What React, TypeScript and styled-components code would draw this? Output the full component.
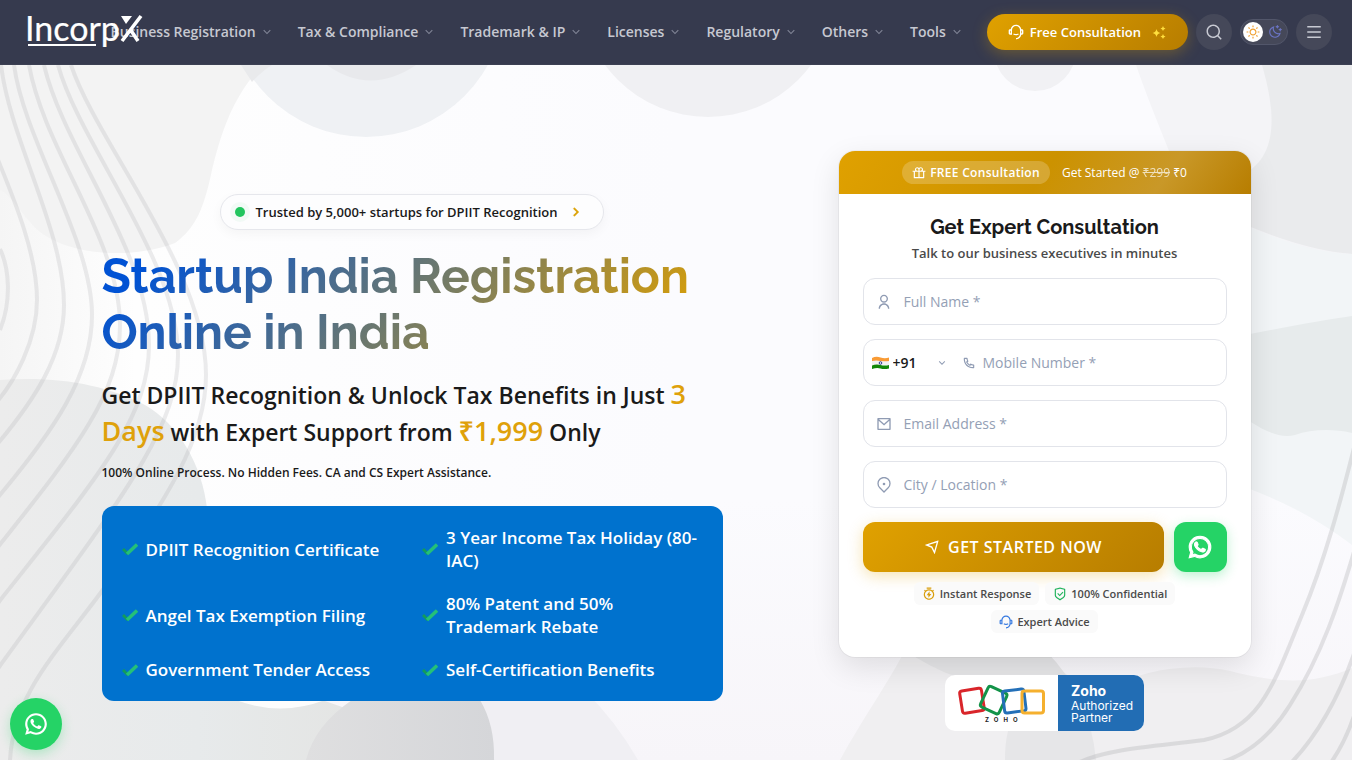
import React from "react";
import styled, { createGlobalStyle } from "styled-components";
import {
  RiArrowDownSLine,
  RiArrowRightSLine,
  RiCustomerService2Line,
  RiGiftLine,
  RiMailLine,
  RiMenuLine,
  RiMoonClearLine,
  RiPhoneLine,
  RiSearchLine,
  RiSendPlaneLine,
  RiShieldCheckLine,
  RiSunLine,
  RiTimerFlashLine,
  RiUserLine,
  RiWhatsappLine,
} from "react-icons/ri";

const GlobalStyle = createGlobalStyle`
  *, *::before, *::after { box-sizing: border-box; }
  body {
    margin: 0;
    background: #fbfbfe;
    color: #1a1a1a;
    font-family: "Open Sans", "Noto Sans", sans-serif;
  }
  button, input, select { font: inherit; }
`;

const Header = styled.header`
  position: relative;
  z-index: 2;
  display: flex;
  align-items: center;
  height: 65px;
  padding: 0 20px;
  border-bottom: 1px solid #3c4053;
  background: #363a4e;
`;

const LogoLink = styled.a`
  position: relative;
  z-index: 1;
  flex: 1 1 0;
  min-width: 0;
  height: 40px;
`;

const LogoArt = styled.svg`
  display: block;
  width: 128px;
  height: 40px;
  margin-left: 4px;
  overflow: visible;
`;

const Nav = styled.nav`
  display: flex;
  align-items: center;
  margin-right: 11px;
`;

const NavLink = styled.a`
  display: flex;
  align-items: center;
  gap: 4px;
  padding: 8px 12px;
  color: #c6c8d1;
  font-size: 14px;
  font-weight: 600;
  line-height: 20px;
  text-decoration: none;
  white-space: nowrap;

  svg { color: #7f8394; }
`;

const Actions = styled.div`
  display: flex;
  align-items: center;
  gap: 8px;
`;

const ConsultButton = styled.button`
  display: flex;
  align-items: center;
  gap: 6px;
  height: 36px;
  padding: 0 21px;
  border: 0;
  border-radius: 18px;
  background: linear-gradient(135deg, #e0a100, #b77d00);
  box-shadow: 0 4px 15px rgba(224, 161, 0, 0.3);
  color: #fff;
  font-size: 13px;
  font-weight: 600;
  white-space: nowrap;
`;

const Sparkles = styled.svg`
  margin-left: 4px;
`;

const RoundButton = styled.button`
  display: grid;
  place-items: center;
  width: 36px;
  height: 36px;
  padding: 0;
  border: 0;
  border-radius: 50%;
  background: #454859;
  color: #c8cad3;
`;

const ThemeToggle = styled.button`
  display: flex;
  align-items: center;
  justify-content: space-between;
  width: 48px;
  height: 26px;
  padding: 0 5px 0 2px;
  border: 1px solid #52566a;
  border-radius: 13px;
  background: #454859;
  color: #6a74c4;
`;

const ToggleKnob = styled.span`
  display: grid;
  place-items: center;
  width: 20px;
  height: 20px;
  border-radius: 50%;
  background: #fff;
  color: #f0a030;
`;

const Hero = styled.main`
  position: relative;
  min-height: calc(100vh - 65px);
  overflow: hidden;
  padding: 86px 24px 28px;
`;

const Backdrop = styled.svg`
  position: absolute;
  inset: 0;
  width: 100%;
  height: 100%;
`;

const HeroGrid = styled.div`
  position: relative;
  display: grid;
  grid-template-columns: minmax(0, 621px) minmax(0, 412px);
  justify-content: space-between;
  max-width: 1149px;
  margin: 0 auto;
`;

const Intro = styled.div`
  padding-top: 43px;
`;

const TrustBadge = styled.a`
  display: flex;
  align-items: center;
  width: fit-content;
  height: 36px;
  margin: 0 auto 18px;
  padding: 0 19px 0 14px;
  border: 1px solid #e6e7ec;
  border-radius: 18px;
  background: #fdfdfe;
  box-shadow: 0 4px 12px rgba(0, 0, 0, 0.04);
  color: #1a1a1a;
  font-size: 13px;
  font-weight: 600;
  text-decoration: none;

  svg { margin-left: 10px; color: #dba000; stroke: currentColor; stroke-width: 1; }
`;

const Dot = styled.span`
  width: 10px;
  height: 10px;
  margin-right: 10px;
  border-radius: 50%;
  background: #22c55e;
  box-shadow: 0 0 0 5px rgba(34, 197, 94, 0.05);
`;

const Title = styled.h1`
  margin: 0;
  background: linear-gradient(135deg, #0052d4 8%, #e0a100 92%);
  background-clip: text;
  -webkit-background-clip: text;
  color: transparent;
  font-family: Raleway, Lato, sans-serif;
  font-size: 48px;
  font-weight: 700;
  line-height: 56px;
`;

const Lead = styled.p`
  margin: 17px 0 12px;
  font-size: 23px;
  font-weight: 600;
  line-height: 37px;
`;

const Highlight = styled.span`
  color: #dfa10a;
  font-size: 27px;
  line-height: 1;
`;

const Note = styled.p`
  margin: 0 0 23px;
  font-size: 12px;
  font-weight: 600;
  line-height: 20px;
`;

const Benefits = styled.ul`
  display: grid;
  grid-template-columns: 1fr 1fr;
  gap: 20px;
  margin: 0;
  padding: 20px;
  border-radius: 12px;
  background: #0072ce;
  list-style: none;
`;

const Benefit = styled.li`
  display: flex;
  align-items: center;
  gap: 8px;
  color: #fff;
  font-size: 17px;
  font-weight: 600;
  line-height: 23px;

  svg { flex: none; }
`;

const Aside = styled.div`
  display: flex;
  flex-direction: column;
  align-items: center;
  gap: 18px;
`;

const Card = styled.section`
  width: 100%;
  overflow: hidden;
  border-radius: 16px;
  background: #fff;
  box-shadow: 0 0 0 1px rgba(0, 0, 0, 0.04), 0 10px 30px rgba(0, 0, 0, 0.11);
`;

const Offer = styled.div`
  display: flex;
  align-items: center;
  justify-content: center;
  gap: 12px;
  height: 43px;
  background: linear-gradient(125deg, #e0a100 0%, #cc9200 50%, #c99828 78%, #b77d00 100%);
  color: #fff;
  font-size: 12px;
`;

const OfferPill = styled.span`
  display: flex;
  align-items: center;
  gap: 4px;
  height: 23px;
  padding: 0 10px;
  border-radius: 12px;
  background: rgba(255, 255, 255, 0.2);
  font-weight: 600;
  letter-spacing: 0.3px;
`;

const OldPrice = styled.s`
  opacity: 0.7;
`;

const Form = styled.form`
  display: flex;
  flex-direction: column;
  gap: 14px;
  padding: 19px 24px 24px;
`;

const FormHead = styled.div`
  padding-bottom: 1px;
  text-align: center;
`;

const FormTitle = styled.h2`
  margin: 0;
  font-family: Raleway, Lato, sans-serif;
  font-size: 20px;
  font-weight: 700;
  line-height: 28px;
`;

const FormHint = styled.p`
  margin: 2px 0 0;
  color: #4a4a4a;
  font-size: 13px;
  font-weight: 600;
  line-height: 20px;
`;

const Field = styled.div<{ $phone?: boolean }>`
  display: flex;
  align-items: center;
  gap: ${(p) => (p.$phone ? "7px" : "12px")};
  height: 47px;
  padding: 0 ${(p) => (p.$phone ? "8px" : "12px")};
  border: 1px solid #e2e4ea;
  border-radius: 12px;
  background: #fff;
  color: #8f9bb3;

  > svg { flex: none; }
`;

const TextInput = styled.input`
  flex: 1;
  min-width: 0;
  padding: 0;
  border: 0;
  outline: 0;
  background: transparent;
  color: #1a1a1a;
  font-size: 14px;

  &::placeholder { color: #94a0b5; opacity: 1; }
`;

const CodePicker = styled.div`
  display: flex;
  align-items: center;
  gap: 4px;
  width: 76px;
  margin-right: 7px;
`;

const CodeSelect = styled.select`
  flex: 1;
  min-width: 0;
  padding: 0;
  border: 0;
  appearance: none;
  background: transparent;
  color: #1a1a1a;
  font-size: 14px;
  font-weight: 600;
`;

const SubmitRow = styled.div`
  display: flex;
  gap: 10px;
`;

const SubmitButton = styled.button`
  display: flex;
  flex: 1;
  align-items: center;
  justify-content: center;
  gap: 8px;
  height: 50px;
  border: 0;
  border-radius: 12px;
  background: linear-gradient(135deg, #e0a100, #b77d00);
  box-shadow: 0 4px 15px rgba(224, 161, 0, 0.3);
  color: #fff;
  font-size: 16px;
  font-weight: 600;
  letter-spacing: 0.5px;
`;

const WhatsappButton = styled.a`
  display: grid;
  place-items: center;
  width: 53px;
  height: 50px;
  border-radius: 12px;
  background: #25d366;
  box-shadow: 0 4px 12px rgba(37, 211, 102, 0.3);
  color: #fff;
`;

const FloatingWhatsapp = styled(WhatsappButton)`
  position: fixed;
  z-index: 3;
  bottom: 10px;
  left: 10px;
  width: 52px;
  height: 52px;
  border-radius: 50%;
`;

const Chips = styled.ul`
  display: flex;
  flex-wrap: wrap;
  justify-content: center;
  gap: 5px 6px;
  margin: -4px 40px 0;
  padding: 0;
  list-style: none;
`;

const Chip = styled.li<{ $tone: string }>`
  display: flex;
  align-items: center;
  gap: 4px;
  height: 23px;
  padding: 0 8px;
  border-radius: 6px;
  background: #fafafa;
  color: #4a4a4a;
  font-size: 11px;
  font-weight: 600;
  white-space: nowrap;

  svg { color: ${(p) => p.$tone}; }
`;

const Partner = styled.a`
  display: flex;
  height: 56px;
  overflow: hidden;
  border-radius: 10px;
  background: #fff;
  color: #fff;
  text-decoration: none;
`;

const PartnerText = styled.span`
  display: flex;
  flex-direction: column;
  justify-content: center;
  width: 86px;
  padding-left: 13px;
  background: #226db4;
  font-family: Inter, sans-serif;
  font-size: 12px;
  line-height: 12px;

  strong { margin-bottom: 2px; font-size: 14px; line-height: 15px; }
`;

const navItems = [
  "Business Registration",
  "Tax & Compliance",
  "Trademark & IP",
  "Licenses",
  "Regulatory",
  "Others",
  "Tools",
];

const benefits = [
  "DPIIT Recognition Certificate",
  "3 Year Income Tax Holiday (80-IAC)",
  "Angel Tax Exemption Filing",
  "80% Patent and 50% Trademark Rebate",
  "Government Tender Access",
  "Self-Certification Benefits",
];

const leftWaves = [
  "M0 249C9 268 12 300 0 330",
  "M-6 150C10 190 37 250 37 300C37 340 15 382 -6 405",
  "M1 65C10 140 64 230 64 305C64 355 35 400 -6 448",
  "M14 65C24 140 92 240 92 315C92 375 55 430 -6 502",
  "M29 65C44 150 120 240 120 325C120 395 75 450 -6 552",
  "M44 65C64 150 149 250 149 345C149 420 95 480 -6 608",
  "M58 65C80 145 178 260 178 355C178 430 120 500 -6 674",
  "M71 65C98 145 206 270 206 375C206 440 165 500 110 580C60 650 14 690 10 760",
];

const rightWaves = [
  "M1356 440C1341 500 1325 560 1302 615C1275 680 1262 728 1204 740C1160 746 1110 748 1080 762",
  "M1356 545C1340 600 1322 655 1290 705C1270 737 1245 757 1215 764",
  "M1356 648C1340 695 1318 735 1290 764",
  "M1356 710C1348 735 1340 750 1330 764",
];

function HeroBackdrop() {
  return (
    <Backdrop viewBox="0 65 1352 695" preserveAspectRatio="none" aria-hidden="true">
      <defs>
        <linearGradient id="edge" x1="0" x2="1" y1="0" y2="0">
          <stop offset="0" stopColor="#ececec" />
          <stop offset=".4" stopColor="#e7eaeb" />
          <stop offset=".7" stopColor="#e4e5e4" />
          <stop offset="1" stopColor="#e6e6e7" />
        </linearGradient>
        <linearGradient id="dark" x1="0" x2="1" y1="0" y2="0">
          <stop offset="0" stopColor="#dfdfe0" />
          <stop offset="1" stopColor="#d5d6d9" />
        </linearGradient>
        <linearGradient id="glow" x1="0" x2="1" y1="0" y2="0">
          <stop offset="0" stopColor="#f5f5f5" />
          <stop offset=".1" stopColor="#fefefe" />
          <stop offset=".5" stopColor="#fbfbfe" />
        </linearGradient>
        <linearGradient id="floor" x1="0" x2="0" y1="0" y2="1">
          <stop offset="0" stopColor="#f7f5f9" stopOpacity="0" />
          <stop offset="1" stopColor="#f7f5f9" />
        </linearGradient>
      </defs>
      <rect y="65" width="1352" height="695" fill="url(#glow)" />
      <rect y="500" width="1352" height="260" fill="url(#floor)" />
      <path d="M0 65H262C235 95 223 125 212 170C204 208 196 228 175 243C130 260 70 255 40 232C25 220 12 195 0 190Z" fill="#f3f3f3" />
      <circle cx="366" cy="-2" r="139" fill="#eff1f4" />
      <path d="M241 65H272Q262 71 252 82Z" fill="#e9eaec" />
      <path d="M327 65Q370 96 416 65Z" fill="#e8e9ec" />
      <circle cx="708" cy="-11" r="128" fill="#f0f0f3" />
      <circle cx="1035" cy="50" r="41" fill="#f1f1f4" />
      <path d="M1136 65H1352V330H1210C1215 240 1165 150 1136 65Z" fill="#f4f4f7" />
      <path d="M1262 65H1352V254Q1300 250 1230 218V180C1278 165 1278 120 1262 65Z" fill="#eaebed" />
      <path d="M1230 218Q1300 252 1352 254V545Q1300 505 1230 482Z" fill="#f2f5f7" />
      <path d="M1230 338Q1310 322 1352 316V433C1330 428 1310 430 1295 435C1275 440 1255 425 1230 408Z" fill="#e7ebec" />
      <path d="M430 690H584Q615 720 638 760H430Z" fill="#f0eff3" />
      <path d="M840 760C865 715 890 680 905 650H1045Q1060 680 1105 690C1140 670 1190 662 1230 671C1280 684 1315 684 1352 668V760Z" fill="#f0eff1" />
      <path d="M905 650H1045Q1090 695 1096 760H1005C1005 730 1012 705 1040 690Q960 690 905 650Z" fill="#e6e6e8" />
      <path d="M0 380C60 376 105 385 145 405C180 425 206 470 208 520L240 700Q280 716 322 700L495 760H0Z" fill="url(#edge)" />
      <path d="M236 700Q280 717 325 700Z" fill="#fdfdfd" />
      <path d="M322 700H480Q495 725 494 760H306Q315 725 352 700Z" fill="url(#dark)" />
      <g fill="none" stroke="#a9a9ad" strokeOpacity=".22" strokeWidth="4">
        {leftWaves.map((d) => <path key={d} d={d} />)}
      </g>
      <g fill="none" stroke="#a9a9ad" strokeOpacity=".3" strokeWidth="4">
        {rightWaves.map((d) => <path key={d} d={d} />)}
      </g>
    </Backdrop>
  );
}

function Logo() {
  return (
    <LogoArt viewBox="0 0 128 40" role="img" aria-label="IncorpX">
      <text x="1" y="29" fill="#fff" stroke="#fff" strokeWidth="0.200" fontFamily="Lato, sans-serif" fontSize="34">Incorp</text>
      <path d="M4 33H72" stroke="#fff" strokeWidth="2" />
      <path d="M117 4L98 29M106 17L114 29" fill="none" stroke="#fff" strokeWidth="3.600" />
      <path d="M97 4H108L102 12Z" fill="#fff" />
    </LogoArt>
  );
}

function Check() {
  return (
    <svg width="16" height="14" viewBox="0 0 16 14" aria-hidden="true">
      <path d="M1 7L6 12" stroke="#129b5c" strokeWidth="3" />
      <path d="M5 12L15 2.500" stroke="#24c078" strokeWidth="3.400" />
    </svg>
  );
}

function MapPin() {
  return (
    <svg width="16" height="16" viewBox="0 0 16 16" fill="none" stroke="currentColor" strokeWidth="1.300" aria-hidden="true">
      <path d="M8 15L3.800 10.800A6 6 0 1 1 12.200 10.800Z" />
      <circle cx="8" cy="7" r="1.300" fill="currentColor" stroke="none" />
    </svg>
  );
}

function IndiaFlag() {
  return (
    <svg width="17" height="14" viewBox="0 0 17 14" aria-hidden="true">
      <path d="M0 2Q4 0 8.500 1.500T17 1.500V5.500H0Z" fill="#f99b35" />
      <path d="M0 5Q4 4 8.500 5T17 5V9H0Z" fill="#f2f2f2" />
      <path d="M0 9.500Q4 8 8.500 9T17 9V12.500Q12 13.500 8.500 12.500T0 13Z" fill="#138808" />
      <circle cx="8.500" cy="7" r="1.300" fill="none" stroke="#2c3a8c" />
    </svg>
  );
}

function ZohoLogo() {
  return (
    <svg width="113" height="56" viewBox="0 0 113 56" role="img" aria-label="Zoho">
      <g fill="none" strokeWidth="3">
        <rect x="16" y="14.500" width="22" height="22.500" rx="2.500" stroke="#d9252a" transform="rotate(-9 27 26)" />
        <rect x="38.500" y="14" width="20.500" height="22.500" rx="2.500" stroke="#139349" transform="rotate(25 49 25)" />
        <rect x="58.500" y="15" width="21.500" height="22" rx="2.500" stroke="#2470b8" transform="rotate(-7 69 26)" />
        <rect x="77" y="16" width="21.500" height="22" rx="2.500" stroke="#f5b02e" />
      </g>
      <text x="40" y="47" fill="#222" fontFamily="Inter, sans-serif" fontSize="6" fontWeight="700" letterSpacing="5">ZOHO</text>
    </svg>
  );
}

export default function App() {
  return (
    <>
      <GlobalStyle />
      <Header>
        <LogoLink href="#home"><Logo /></LogoLink>
        <Nav aria-label="Main">
          {navItems.map((item) => (
            <NavLink href="#menu" key={item}>
              {item}
              <RiArrowDownSLine size={14} />
            </NavLink>
          ))}
        </Nav>
        <Actions>
          <ConsultButton type="button">
            <RiCustomerService2Line size={16} />
            Free Consultation
            <Sparkles width="16" height="16" viewBox="0 0 16 16" fill="#ffdf3d" aria-hidden="true">
              <path d="M5.500 5Q6.200 8.300 9.500 9Q6.200 9.700 5.500 13Q4.800 9.700 1.500 9Q4.800 8.300 5.500 5Z" />
              <path d="M12 2Q12.400 4 14.500 4.500Q12.400 5 12 7Q11.600 5 9.500 4.500Q11.600 4 12 2Z" />
              <path d="M12 10Q12.400 12 14.500 12.500Q12.400 13 12 15Q11.600 13 9.500 12.500Q11.600 12 12 10Z" />
            </Sparkles>
          </ConsultButton>
          <RoundButton type="button" aria-label="Search"><RiSearchLine size={18} /></RoundButton>
          <ThemeToggle type="button" aria-label="Toggle theme">
            <ToggleKnob><RiSunLine size={14} /></ToggleKnob>
            <RiMoonClearLine size={14} />
          </ThemeToggle>
          <RoundButton type="button" aria-label="Menu"><RiMenuLine size={18} /></RoundButton>
        </Actions>
      </Header>

      <Hero>
        <HeroBackdrop />
        <HeroGrid>
          <Intro>
            <TrustBadge href="#reviews">
              <Dot />
              Trusted by 5,000+ startups for DPIIT Recognition
              <RiArrowRightSLine size={16} />
            </TrustBadge>
            <Title>Startup India Registration Online in India</Title>
            <Lead>
              Get DPIIT Recognition &amp; Unlock Tax Benefits in Just <Highlight>3 Days</Highlight> with
              Expert Support from <Highlight>₹1,999</Highlight> Only
            </Lead>
            <Note>100% Online Process. No Hidden Fees. CA and CS Expert Assistance.</Note>
            <Benefits>
              {benefits.map((text) => (
                <Benefit key={text}>
                  <Check />
                  {text}
                </Benefit>
              ))}
            </Benefits>
          </Intro>

          <Aside>
            <Card>
              <Offer>
                <OfferPill><RiGiftLine size={14} />FREE Consultation</OfferPill>
                <span>Get Started @ <OldPrice>₹299</OldPrice> ₹0</span>
              </Offer>
              <Form>
                <FormHead>
                  <FormTitle>Get Expert Consultation</FormTitle>
                  <FormHint>Talk to our business executives in minutes</FormHint>
                </FormHead>
                <Field>
                  <RiUserLine size={16} />
                  <TextInput type="text" aria-label="Full Name" placeholder="Full Name *" />
                </Field>
                <Field $phone>
                  <CodePicker>
                    <IndiaFlag />
                    <CodeSelect aria-label="Country code" defaultValue="+91">
                      <option>+91</option>
                    </CodeSelect>
                    <RiArrowDownSLine size={12} />
                  </CodePicker>
                  <RiPhoneLine size={14} />
                  <TextInput type="tel" aria-label="Mobile Number" placeholder="Mobile Number *" />
                </Field>
                <Field>
                  <RiMailLine size={16} />
                  <TextInput type="email" aria-label="Email Address" placeholder="Email Address *" />
                </Field>
                <Field>
                  <MapPin />
                  <TextInput type="text" aria-label="City or location" placeholder="City / Location *" />
                </Field>
                <SubmitRow>
                  <SubmitButton type="button">
                    <RiSendPlaneLine size={16} />
                    GET STARTED NOW
                  </SubmitButton>
                  <WhatsappButton href="#whatsapp" aria-label="WhatsApp">
                    <RiWhatsappLine size={26} stroke="currentColor" strokeWidth={1} />
                  </WhatsappButton>
                </SubmitRow>
                <Chips>
                  <Chip $tone="#d99e0b"><RiTimerFlashLine size={14} />Instant Response</Chip>
                  <Chip $tone="#22b35e"><RiShieldCheckLine size={14} />100% Confidential</Chip>
                  <Chip $tone="#3478e0"><RiCustomerService2Line size={14} />Expert Advice</Chip>
                </Chips>
              </Form>
            </Card>
            <Partner href="#zoho">
              <ZohoLogo />
              <PartnerText>
                <strong>Zoho</strong>
                <span>Authorized</span>
                <span>Partner</span>
              </PartnerText>
            </Partner>
          </Aside>
        </HeroGrid>
      </Hero>
      <FloatingWhatsapp href="#whatsapp" aria-label="Chat on WhatsApp"><RiWhatsappLine size={26} /></FloatingWhatsapp>
    </>
  );
}
